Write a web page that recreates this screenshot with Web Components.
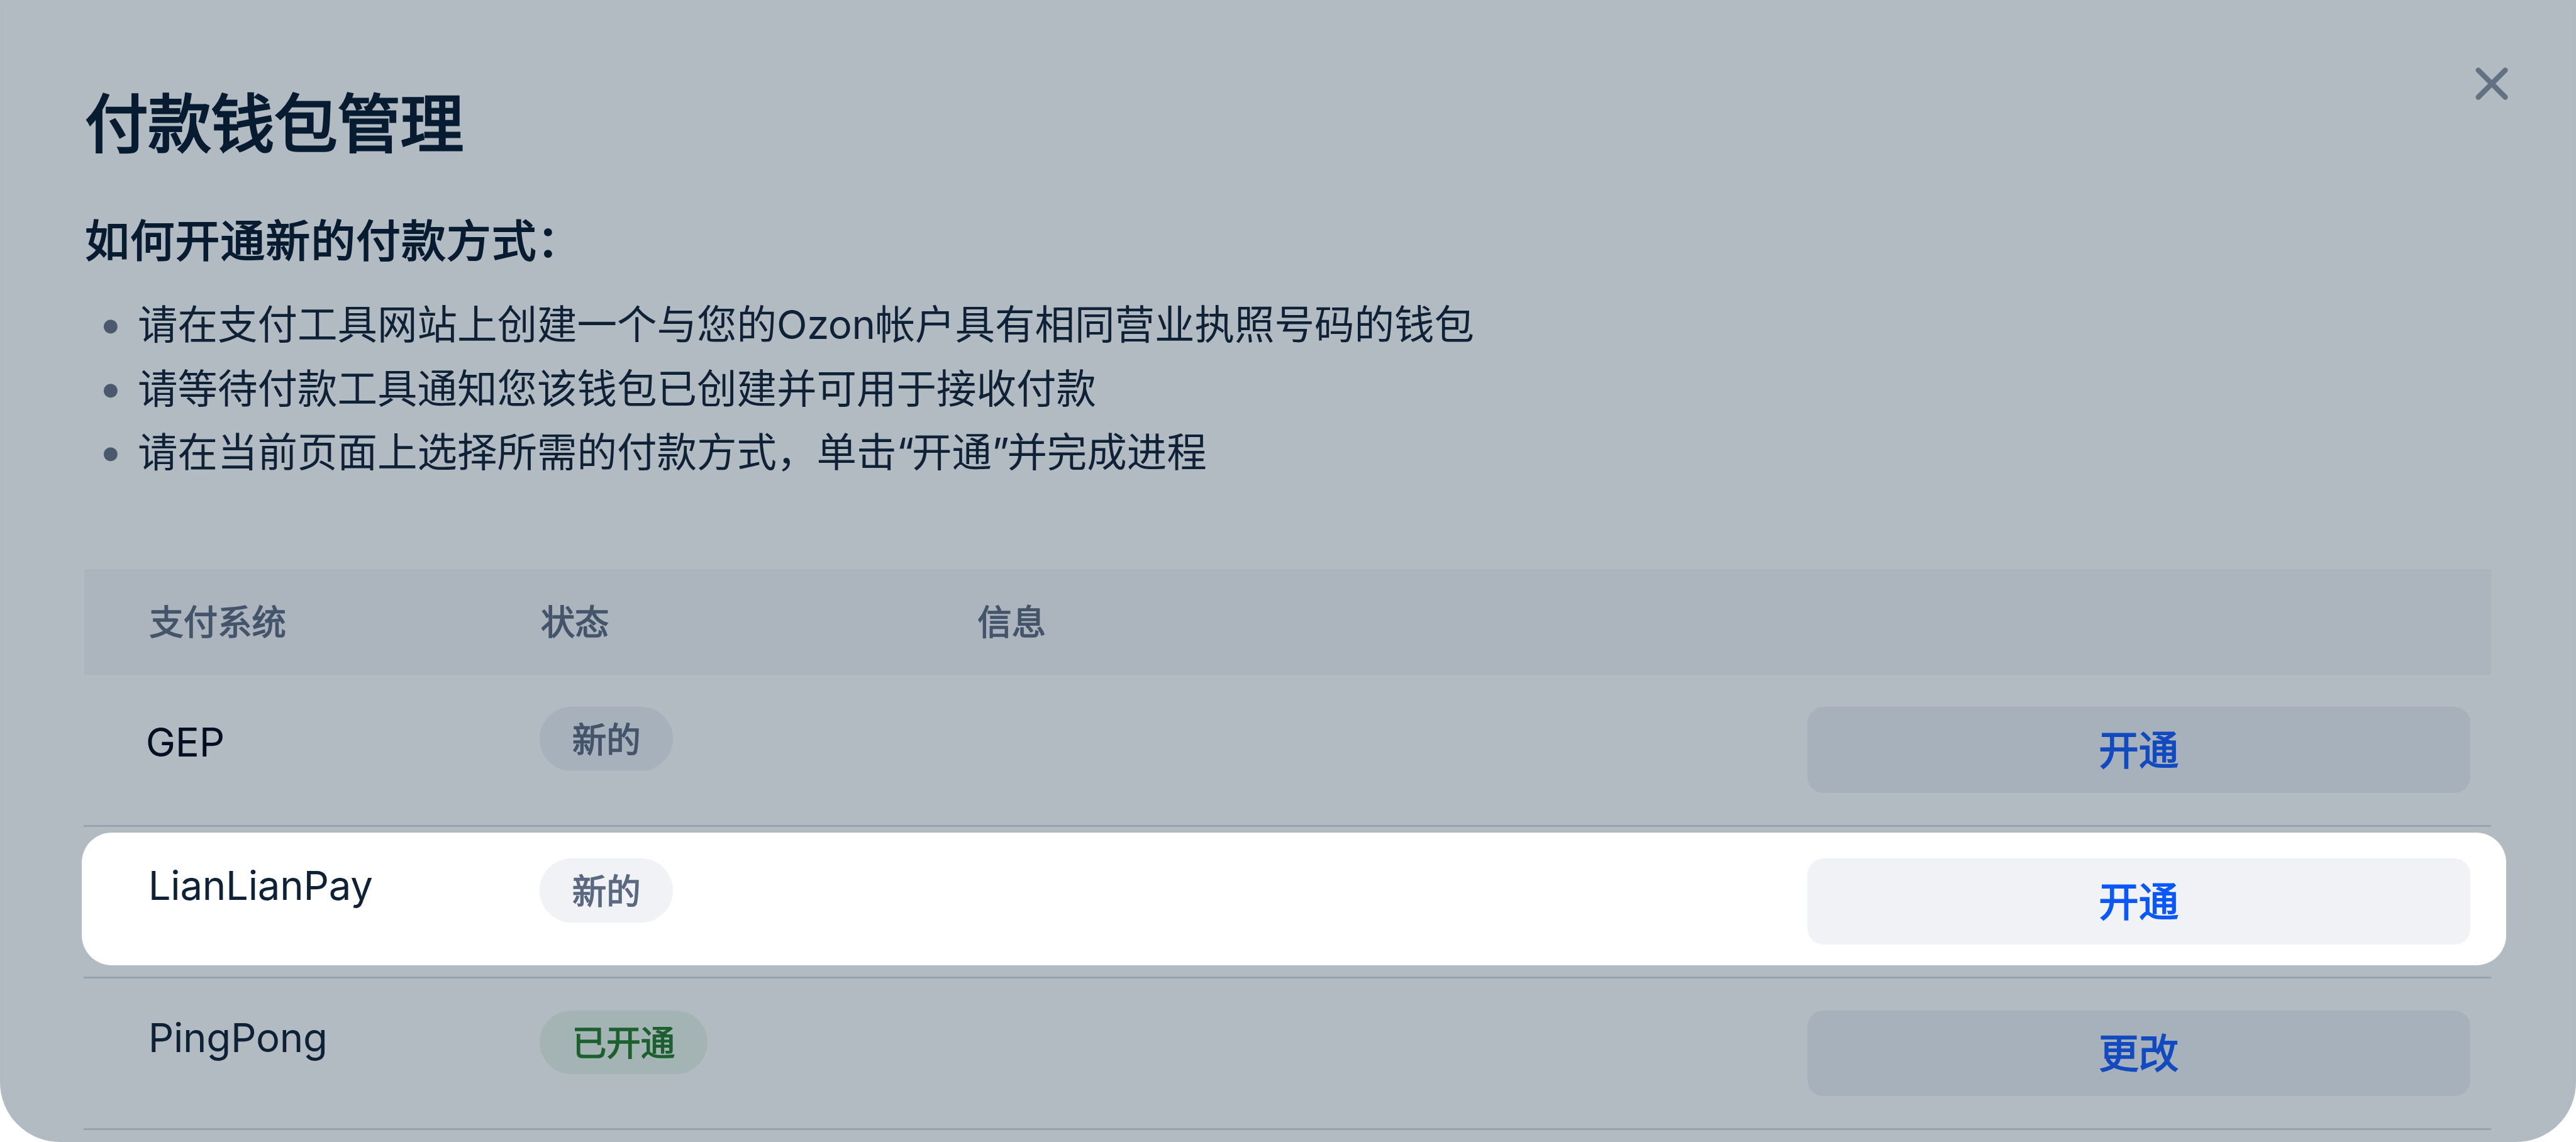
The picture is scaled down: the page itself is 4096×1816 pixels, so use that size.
<!DOCTYPE html>
<html lang="zh-CN">
<head>
<meta charset="utf-8">
<title>付款钱包管理</title>
<style>
    html,
    body {
        margin: 0;
        height: 100%;
        overflow: hidden;
        background: #fff;
    }
    body {
        /* one design unit, every size below is a multiple of it */
        --u: 0.7938px;
        --text: #0e2136;
        --muted: #44546a;
        --fill: #a7b1bb;
        --link: #124abf;
        --line: #95a2b0;
        font-family: Inter, "Noto Sans CJK SC", sans-serif;
        color: var(--text);
    }
    .latin {
        letter-spacing: calc(var(--u) * -0.6);
    }
    .quote {
        letter-spacing: calc(var(--u) * -4.5);
    }
</style>
</head>
<body>
<wallet-dialog heading="付款钱包管理">
    <how-to heading="如何开通新的付款方式：">
        <li>请在支付工具网站上创建一个与您的<span class="latin">Ozon</span>帐户具有相同营业执照号码的钱包</li>
        <li>请等待付款工具通知您该钱包已创建并可用于接收付款</li>
        <li>请在当前页面上选择所需的付款方式，单击<span class="quote">“</span>开通<span class="quote">”</span>并完成进程</li>
    </how-to>
    <wallet-table>
        <wallet-row class="gep" name="GEP">
            <status-badge slot="status">新的</status-badge>
            <action-button slot="action">开通</action-button>
        </wallet-row>
        <wallet-row name="LianLianPay" highlighted>
            <status-badge slot="status">新的</status-badge>
            <action-button slot="action">开通</action-button>
        </wallet-row>
        <wallet-row name="PingPong">
            <status-badge slot="status" kind="success">已开通</status-badge>
            <action-button slot="action">更改</action-button>
        </wallet-row>
    </wallet-table>
</wallet-dialog>

<script>
class WalletDialog extends HTMLElement {
    constructor() {
        super();
        this.attachShadow({ mode: "open" });
    }

    connectedCallback() {
        this.shadowRoot.innerHTML = `
            <style>
                :host {
                    display: flex;
                    flex-direction: column;
                    position: relative;
                    box-sizing: border-box;
                    width: 100vw;
                    height: 100vh;
                    overflow: hidden;
                    padding: calc(var(--u) * 169) calc(var(--u) * 170) 0 calc(var(--u) * 168);
                    border-radius: 0 0 calc(var(--u) * 120) calc(var(--u) * 120);
                    background: #b2bac2;
                }
                :host::before {
                    content: "";
                    position: absolute;
                    inset: calc(var(--u) * 8) calc(var(--u) * 4) calc(var(--u) * 120);
                    border: solid #b0b8c1;
                    border-width: 0 calc(var(--u) * 4);
                    pointer-events: none;
                }
                h1 {
                    margin: 0 0 0 calc(var(--u) * 2);
                    font-size: calc(var(--u) * 127);
                    letter-spacing: calc(var(--u) * -0.6);
                    line-height: calc(var(--u) * 160);
                    font-weight: 400;
                    -webkit-text-stroke: 0.032em;
                    color: #081c31;
                }
                .close {
                    position: absolute;
                    top: calc(var(--u) * 120);
                    right: calc(var(--u) * 121);
                    width: calc(var(--u) * 96);
                    height: calc(var(--u) * 96);
                    padding: 0;
                    border: 0;
                    background: none;
                }
                svg {
                    display: block;
                    width: 100%;
                    height: 100%;
                }
            </style>
            <h1>${this.getAttribute("heading")}</h1>
            <slot></slot>
            <button class="close" aria-label="关闭">
                <svg viewBox="0 0 96 96" fill="none" stroke="#637282" stroke-width="10.5" stroke-linecap="round">
                    <path d="M21 21 75 75M75 21 21 75"/>
                </svg>
            </button>
        `;
    }
}

class HowTo extends HTMLElement {
    constructor() {
        super();
        this.attachShadow({ mode: "open" });
    }

    connectedCallback() {
        this.shadowRoot.innerHTML = `
            <style>
                :host {
                    display: block;
                    margin-top: calc(var(--u) * 94);
                }
                h2 {
                    margin: 0 0 0 calc(var(--u) * 2);
                    font-size: calc(var(--u) * 89);
                    letter-spacing: calc(var(--u) * 1.6);
                    line-height: calc(var(--u) * 121);
                    font-weight: 400;
                    -webkit-text-stroke: 0.03em;
                    color: #081c31;
                }
                ul {
                    margin: calc(var(--u) * 42) 0 0;
                    padding: 0;
                    list-style: none;
                }
                ::slotted(li) {
                    display: block;
                    padding-left: calc(var(--u) * 108);
                    font-size: calc(var(--u) * 80);
                    line-height: calc(var(--u) * 128);
                    white-space: nowrap;
                    background: radial-gradient(circle at calc(var(--u) * 54) calc(var(--u) * 68.5),
                        #4a5a6c calc(var(--u) * 13), transparent calc(var(--u) * 14.5));
                }
            </style>
            <h2>${this.getAttribute("heading")}</h2>
            <ul><slot></slot></ul>
        `;
    }
}

class WalletTable extends HTMLElement {
    constructor() {
        super();
        this.attachShadow({ mode: "open" });
    }

    connectedCallback() {
        this.shadowRoot.innerHTML = `
            <style>
                :host {
                    display: block;
                    margin-top: calc(var(--u) * 170);
                    --columns: calc(var(--u) * 784) calc(var(--u) * 875) 1fr calc(var(--u) * 1328);
                }
                .head {
                    display: grid;
                    grid-template-columns: var(--columns);
                    margin-left: calc(var(--u) * 1);
                    padding: 0 calc(var(--u) * 43) 0 calc(var(--u) * 130);
                    background: #acb4be;
                    font-size: calc(var(--u) * 68.6);
                    line-height: calc(var(--u) * 212);
                    -webkit-text-stroke: 0.028em;
                    color: var(--muted);
                }
            </style>
            <div class="head">
                <span>支付系统</span>
                <span>状态</span>
                <span>信息</span>
                <span></span>
            </div>
            <slot></slot>
        `;
    }
}

class WalletRow extends HTMLElement {
    constructor() {
        super();
        this.attachShadow({ mode: "open" });
    }

    connectedCallback() {
        this.shadowRoot.innerHTML = `
            <style>
                :host {
                    display: grid;
                    grid-template-columns: var(--columns);
                    align-items: start;
                    position: relative;
                    box-sizing: border-box;
                    height: calc(var(--u) * 304);
                    padding: calc(var(--u) * 64) calc(var(--u) * 42) 0 calc(var(--u) * 129);
                    border-bottom: calc(var(--u) * 5) solid var(--line);
                }
                :host([highlighted]) {
                    --text: #0b1e33;
                    --muted: #5a6980;
                    --fill: #f0f2f6;
                    --link: #0a58fb;
                }
                :host([highlighted])::before {
                    content: "";
                    position: absolute;
                    inset: calc(var(--u) * 12) calc(var(--u) * -30) calc(var(--u) * 23) calc(var(--u) * -4);
                    border-radius: calc(var(--u) * 60);
                    background: #fff;
                }
                .name,
                ::slotted(*) {
                    position: relative;
                }
                .name {
                    font-size: calc(var(--u) * 80);
                    letter-spacing: calc(var(--u) * -0.35);
                    line-height: calc(var(--u) * 108);
                }
                :host(.gep) .name {
                    margin: calc(var(--u) * 17) 0 0 calc(var(--u) * -5);
                    color: #000f22;
                }
            </style>
            <div class="name">${this.getAttribute("name")}</div>
            <slot name="status"></slot>
            <div></div>
            <slot name="action"></slot>
        `;
    }
}

class StatusBadge extends HTMLElement {
    constructor() {
        super();
        this.attachShadow({ mode: "open" });
    }

    connectedCallback() {
        this.shadowRoot.innerHTML = `
            <style>
                :host {
                    justify-self: start;
                    padding: calc(var(--u) * 2) calc(var(--u) * 65) 0;
                    border-radius: calc(var(--u) * 64);
                    background: var(--fill);
                    color: var(--muted);
                    font-size: calc(var(--u) * 68.8);
                    line-height: calc(var(--u) * 126);
                    -webkit-text-stroke: 0.028em;
                }
                :host([kind="success"]) {
                    background: #a4b4b4;
                    color: #1d6030;
                }
            </style>
            <slot></slot>
        `;
    }
}

class ActionButton extends HTMLElement {
    constructor() {
        super();
        this.attachShadow({ mode: "open" });
    }

    connectedCallback() {
        this.shadowRoot.innerHTML = `
            <style>
                :host {
                    display: block;
                    padding-top: calc(var(--u) * 2);
                    border-radius: calc(var(--u) * 32);
                    background: var(--fill);
                    color: var(--link);
                    font-size: calc(var(--u) * 80);
                    line-height: calc(var(--u) * 170);
                    -webkit-text-stroke: 0.028em;
                    text-align: center;
                }
            </style>
            <slot></slot>
        `;
    }
}

customElements.define("wallet-dialog", WalletDialog);
customElements.define("how-to", HowTo);
customElements.define("wallet-table", WalletTable);
customElements.define("wallet-row", WalletRow);
customElements.define("status-badge", StatusBadge);
customElements.define("action-button", ActionButton);
</script>
</body>
</html>
